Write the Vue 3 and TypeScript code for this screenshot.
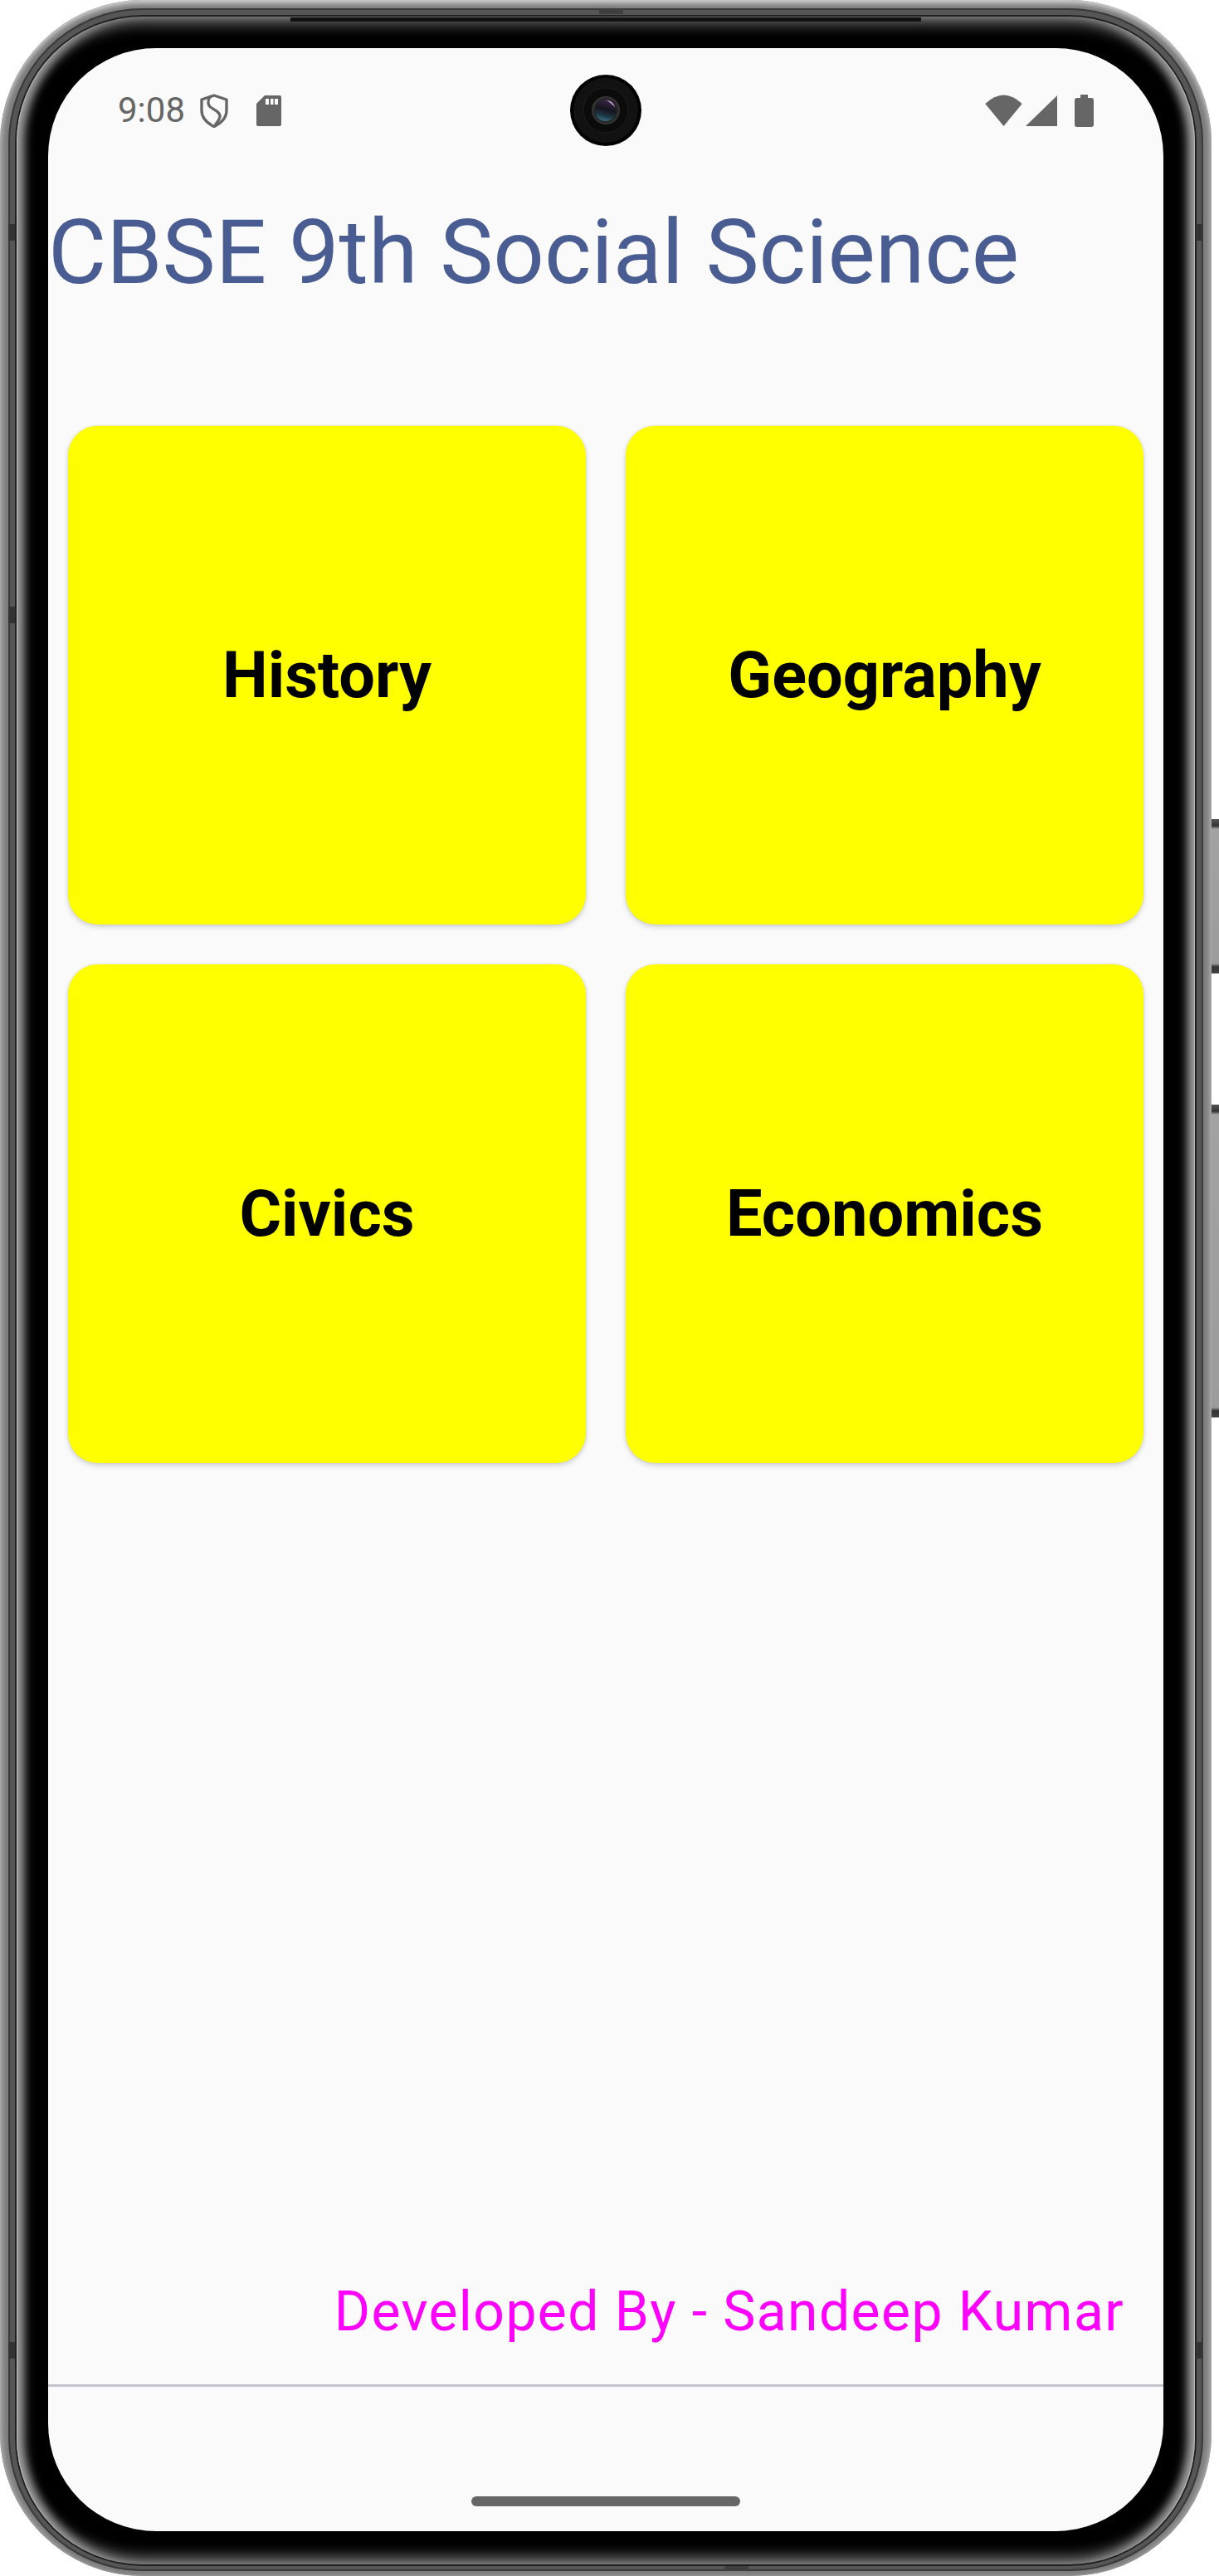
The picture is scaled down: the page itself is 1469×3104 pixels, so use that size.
<script setup lang="ts">
interface Subject {
  name: string
}
const subjects: Subject[] = [
  { name: 'History' },
  { name: 'Geography' },
  { name: 'Civics' },
  { name: 'Economics' },
]
</script>

<template>
  <div class="phone">
    <span class="side-btn btn-power"></span>
    <span class="side-btn btn-volume"></span>
    <span class="antenna ant-l1"></span>
    <span class="antenna ant-l2"></span>
    <span class="antenna ant-l3"></span>
    <span class="antenna ant-r1"></span>
    <span class="antenna ant-r3"></span>
    <span class="antenna-h ant-top"></span>
    <span class="antenna-h ant-bottom"></span>
    <div class="band">
      <div class="seam">
        <div class="chassis">
          <span class="top-bar"></span>
          <div class="screen">
            <svg class="camera" viewBox="0 0 86 86" aria-hidden="true">
              <defs>
                <linearGradient id="lens" x1="0.6" y1="0" x2="0.35" y2="1">
                  <stop offset="0%" stop-color="#3a2a4c" />
                  <stop offset="45%" stop-color="#15131c" />
                  <stop offset="75%" stop-color="#1d3a46" />
                  <stop offset="100%" stop-color="#3b7486" />
                </linearGradient>
                <radialGradient id="lensRing" cx="50%" cy="50%" r="50%">
                  <stop offset="70%" stop-color="#1b1b1b" />
                  <stop offset="100%" stop-color="#3a3a3a" />
                </radialGradient>
              </defs>
              <circle cx="43" cy="43" r="43" fill="#000" />
              <circle cx="43" cy="43" r="39" fill="#121212" />
              <circle cx="43" cy="43" r="27" fill="#0b0b0b" stroke="#1d1d1d" stroke-width="1" />
              <circle cx="43" cy="43" r="17" fill="url(#lensRing)" />
              <circle cx="43" cy="43" r="13" fill="url(#lens)" />
              <path d="M44 31 C49 31 53 35 54 39 C51 36 48 33 44 31 Z" fill="#d9a6e6" />
            </svg>

            <div class="status-bar">
              <div class="status-left">
                <span class="time">9:08</span>
                <svg class="ic-shield" viewBox="0 0 34 41" aria-hidden="true">
                  <path d="M17 2 L32 7 V20 C32 29 26 35 17 39.5 C8 35 2 29 2 20 V7 Z" fill="none" stroke="#666" stroke-width="3.4" stroke-linejoin="round" />
                  <path d="M12 4 C9 9 9 14 14 17 C19 20 25 23 24 28 C23 32 20 35 18 38" fill="none" stroke="#666" stroke-width="3.2" />
                </svg>
                <svg class="ic-sd" viewBox="0 0 30 37" aria-hidden="true">
                  <path d="M10 0 H28 a2 2 0 0 1 2 2 V35 a2 2 0 0 1 -2 2 H2 a2 2 0 0 1 -2 -2 V10 Z" fill="#666" />
                  <rect x="11" y="4" width="4" height="7" fill="#fafafa" />
                  <rect x="17" y="4" width="3.5" height="7" fill="#fafafa" />
                  <rect x="22" y="4" width="4" height="7" fill="#fafafa" />
                </svg>
              </div>
              <div class="status-right">
                <svg class="ic-wifi" viewBox="0 0 45 38" aria-hidden="true">
                  <path d="M0.3 11 Q22.5 -10 44.7 11 L22.5 38 Z" fill="#666" />
                </svg>
                <svg class="ic-signal" viewBox="0 0 38 37" aria-hidden="true">
                  <path d="M0 37 L38 0 V37 Z" fill="#666" />
                </svg>
                <svg class="ic-battery" viewBox="0 0 23 39" aria-hidden="true">
                  <path d="M7 0 H16 V4 H20 a3 3 0 0 1 3 3 V36 a3 3 0 0 1 -3 3 H3 a3 3 0 0 1 -3 -3 V7 a3 3 0 0 1 3 -3 H7 Z" fill="#666" />
                </svg>
              </div>
            </div>

            <h1 class="title">CBSE 9th Social Science</h1>

            <div class="grid">
              <button v-for="s in subjects" :key="s.name" class="card" type="button">{{ s.name }}</button>
            </div>

            <p class="credit">Developed By - Sandeep Kumar</p>

            <div class="nav-area">
              <span class="home-pill"></span>
            </div>
          </div>
        </div>
      </div>
    </div>
  </div>
</template>

<style>
html,
body {
  margin: 0;
  background: #fff;
}
</style>

<style scoped>
.phone {
  position: relative;
  box-sizing: border-box;
  width: 1460px;
  height: 3104px;
  padding: 10px 10px 6px;
  border-radius: 172px;
  background: #7c7c7c;
  box-shadow: inset 0 7px 6px -3px #d0d0d0, inset 6px 0 6px -3px #aaa, inset -6px 0 6px -3px #aaa, inset 0 -4px 4px -2px #8c8c8c;
}
.band {
  box-sizing: border-box;
  height: 100%;
  padding: 8px 8px 6px;
  border-radius: 162px;
  background: #565656;
  box-shadow: inset 0 0 0 2px #3a3a3a;
}
.seam {
  box-sizing: border-box;
  height: 100%;
  padding: 2px;
  border-radius: 154px;
  background: #202020;
}
.chassis {
  position: relative;
  box-sizing: border-box;
  height: 100%;
  padding: 38px 38px 40px;
  border-radius: 152px;
  background: #000;
  box-shadow: inset 2px 0 1px -1px #bbb, inset -2px 0 1px -1px #bbb, inset 13px 0 12px -4px #a0a0a0, inset -13px 0 12px -4px #a0a0a0, inset 0 16px 16px -6px #5c5c5c, inset 0 -16px 16px -6px #666;
}
.top-bar {
  position: absolute;
  top: 1px;
  left: 330px;
  right: 330px;
  height: 5px;
  background: #111;
}
.screen {
  position: relative;
  display: flex;
  flex-direction: column;
  box-sizing: border-box;
  height: 100%;
  border-radius: 130px;
  background: #fafafa;
  overflow: hidden;
  font-family: Roboto, "Liberation Sans", sans-serif;
}
.camera {
  position: absolute;
  top: 32px;
  left: 629px;
  width: 86px;
  height: 86px;
}
.status-bar {
  display: flex;
  flex: none;
  align-items: center;
  justify-content: space-between;
  height: 150px;
  padding: 0 84px;
}
.status-left,
.status-right {
  display: flex;
  align-items: center;
}
.time {
  font-size: 42px;
  line-height: 50px;
  color: #666;
}
.ic-shield {
  width: 34px;
  height: 41px;
  margin-left: 18px;
}
.ic-sd {
  width: 30px;
  height: 37px;
  margin-left: 34px;
}
.ic-wifi {
  width: 45px;
  height: 38px;
}
.ic-signal {
  width: 38px;
  height: 37px;
  margin-left: 4px;
}
.ic-battery {
  width: 23px;
  height: 39px;
  margin-left: 21px;
}
.title {
  flex: none;
  margin: 33px 0 0;
  font-size: 108px;
  font-weight: 400;
  line-height: 127px;
  color: #4a5d93;
  white-space: nowrap;
}
.grid {
  display: grid;
  flex: none;
  grid-template-columns: 1fr 1fr;
  grid-auto-rows: 601px;
  gap: 48px;
  margin-top: 145px;
  padding: 0 24px;
}
.card {
  border: 0;
  border-radius: 36px;
  background: #ff0;
  box-shadow: 0 3px 6px rgba(0, 0, 0, 0.16), 0 0 3px rgba(0, 0, 0, 0.1);
  font-family: inherit;
  font-size: 77.5px;
  font-weight: 700;
  color: #000;
}
.credit {
  flex: none;
  margin: auto 0 49px;
  padding-right: 47px;
  font-size: 66px;
  letter-spacing: 1.42px;
  line-height: 77px;
  color: #f0f;
  text-align: right;
  white-space: nowrap;
}
.nav-area {
  display: flex;
  flex: none;
  justify-content: center;
  box-sizing: border-box;
  height: 177px;
  padding-top: 132px;
  border-top: 3px solid #c6c2cf;
}
.home-pill {
  width: 324px;
  height: 12px;
  border-radius: 6px;
  background: #666;
}
.side-btn {
  position: absolute;
  left: 1460px;
  width: 9px;
  background: linear-gradient(#555 0, #333 8px, #a2a2a2 12px, #9c9c9c calc(100% - 12px), #333 calc(100% - 8px), #444 100%);
}
.btn-power {
  top: 987px;
  height: 186px;
}
.btn-volume {
  top: 1331px;
  height: 377px;
}
.antenna {
  position: absolute;
  width: 8px;
  height: 20px;
  background: #333;
}
.ant-l1,
.ant-l2,
.ant-l3 {
  left: 10px;
}
.ant-r1,
.ant-r3 {
  left: 1441px;
}
.ant-l1,
.ant-r1 {
  top: 270px;
}
.ant-l2 {
  top: 731px;
}
.ant-l3,
.ant-r3 {
  top: 2822px;
}
.antenna-h {
  position: absolute;
  width: 29px;
  height: 6px;
  background: #3f3f3f;
}
.ant-top {
  left: 722px;
  top: 11px;
}
.ant-bottom {
  left: 873px;
  top: 3092px;
}
</style>
